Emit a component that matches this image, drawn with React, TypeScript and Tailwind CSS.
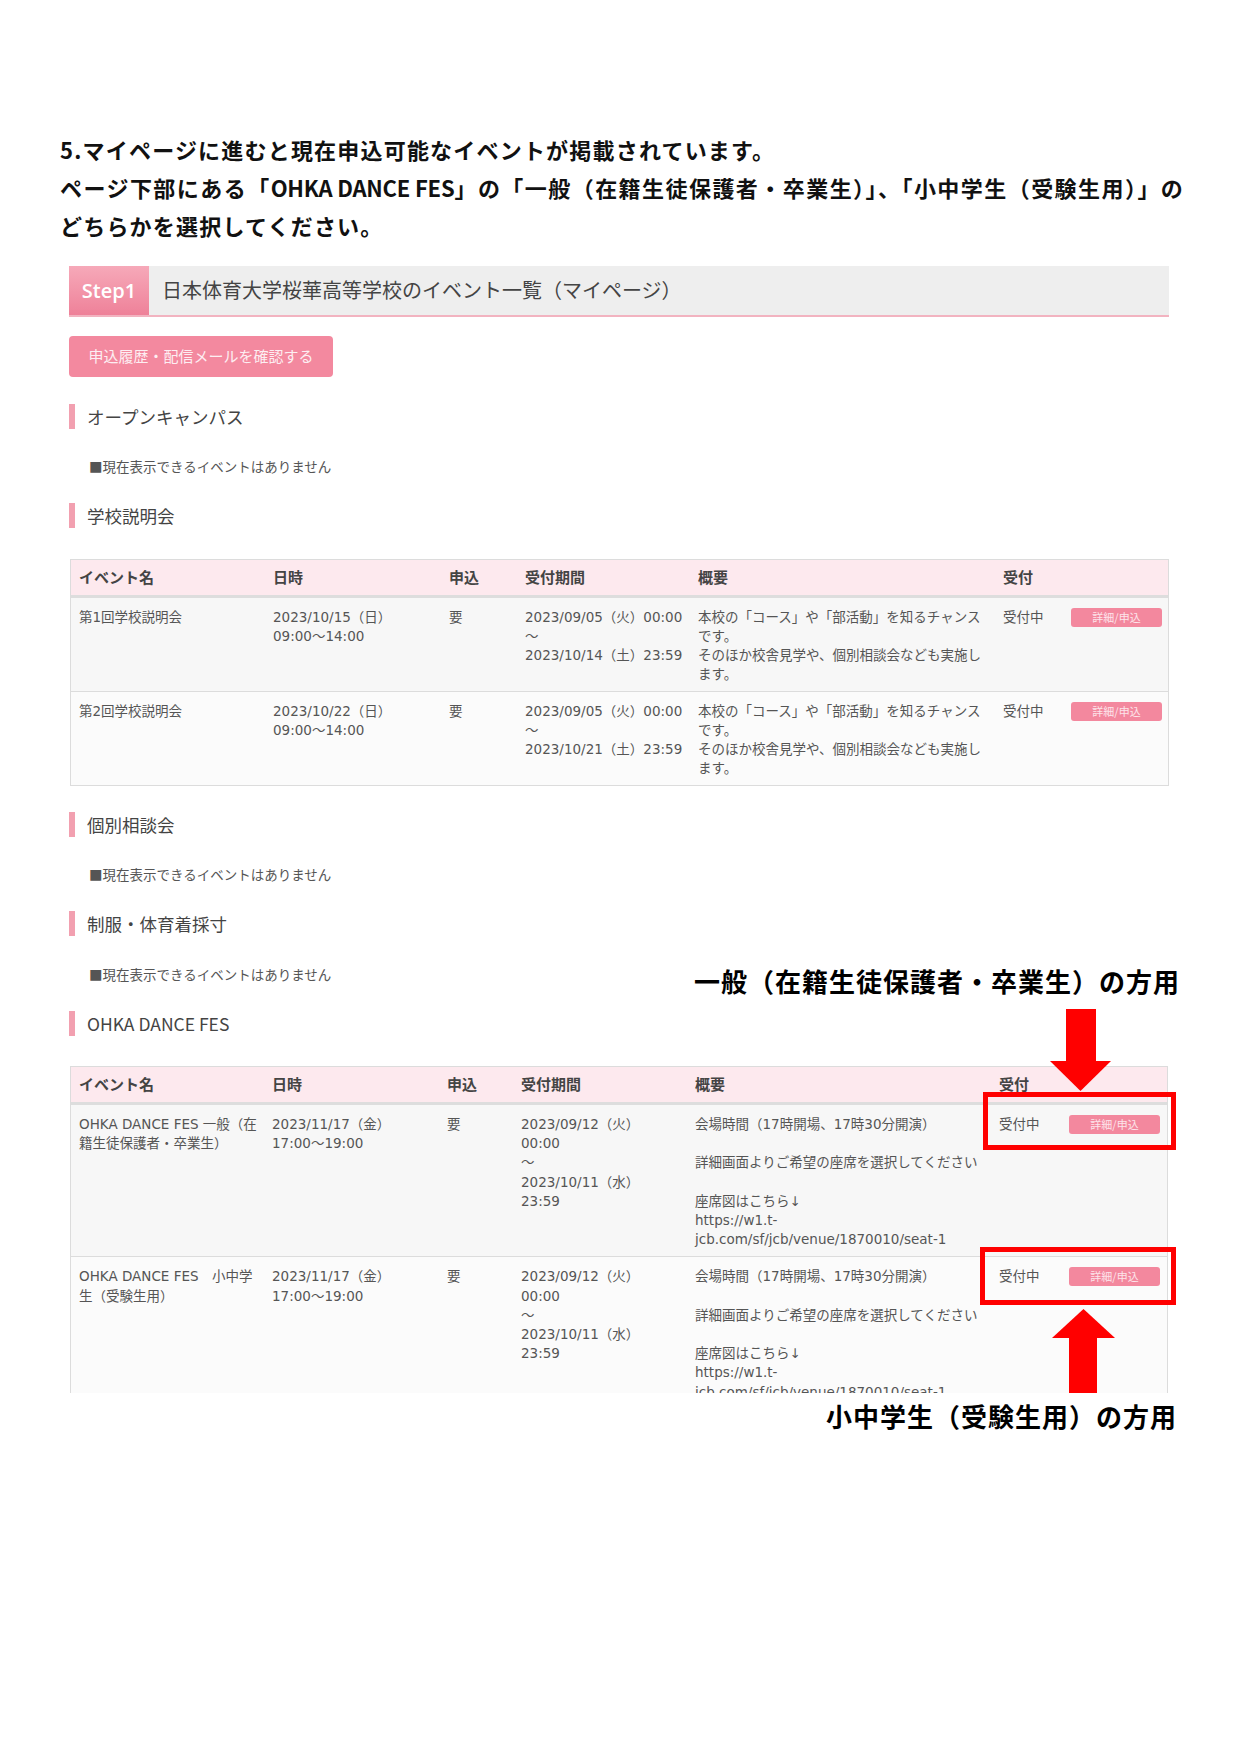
import React from "react";

const JP = { fontFamily: '"Noto Sans CJK JP", "Noto Sans", sans-serif' };
const TBL = { fontFamily: '"DejaVu Sans", "Noto Sans CJK JP", sans-serif' };

function Heading({ children }: { children: React.ReactNode }) {
  return (
    <div className="flex items-center h-[25px]">
      <div className="w-[6px] h-[25px] bg-[#f2a0b0]" />
      <div className="ml-[12px] text-[17.5px] leading-[25px] text-[#444]">{children}</div>
    </div>
  );
}

function Empty() {
  return (
    <div className="pl-[20px] text-[13.5px] leading-[20px] text-[#555]">■現在表示できるイベントはありません</div>
  );
}

function Btn() {
  return (
    <div className="w-[91px] h-[19px] rounded-[3px] bg-[#f3889e] text-[11px] leading-[19px] text-center text-[#fde4ea]" style={JP}>
      詳細/申込
    </div>
  );
}

type Row = { name: string[]; date: string[]; req: string; period: string[]; summary: string[]; status: string };

function Table({ cols, rows, lh, clipH }: { cols: string; rows: Row[]; lh: string; clipH?: string }) {
  const cell = "px-2 pt-[10px] pb-[7px]";
  return (
    <div className={clipH ? `${clipH} overflow-hidden` : ""}>
      <div className="border border-[#dcdcdc] border-b-0">
        <div className={`grid ${cols} bg-[#fde9ee] h-[38px] items-center border-b-[3px] border-[#dddddd] font-bold text-[15px] text-[#444]`}>
          <div className="px-2">イベント名</div>
          <div className="px-2">日時</div>
          <div className="px-2">申込</div>
          <div className="px-2">受付期間</div>
          <div className="px-2">概要</div>
          <div className="px-2">受付</div>
          <div className="px-2" />
        </div>
        {rows.map((r, i) => (
          <div
            key={i}
            style={TBL}
            className={`grid ${cols} ${lh} text-[13.5px] text-[#555] border-b border-[#dcdcdc] ${i % 2 === 0 ? "bg-[#f7f7f7]" : "bg-[#fbfbfb]"}`}
          >
            <div className={`${cell} whitespace-nowrap`}>
              {r.name.map((l, j) => (<div key={j}>{l}</div>))}
            </div>
            <div className={`${cell} whitespace-nowrap`}>
              {r.date.map((l, j) => (<div key={j}>{l}</div>))}
            </div>
            <div className={cell}>{r.req}</div>
            <div className={`${cell} whitespace-nowrap`}>
              {r.period.map((l, j) => (<div key={j}>{l}</div>))}
            </div>
            <div className={`${cell} whitespace-nowrap`}>
              {r.summary.map((l, j) => (<div key={j}>{l === "" ? "\u00a0" : l}</div>))}
            </div>
            <div className={cell}>{r.status}</div>
            <div className="pl-2 pt-[10px] pb-[7px]">
              <Btn />
            </div>
          </div>
        ))}
      </div>
    </div>
  );
}

const rows1: Row[] = [
  {
    name: ["第1回学校説明会"],
    date: ["2023/10/15（日）", "09:00～14:00"],
    req: "要",
    period: ["2023/09/05（火）00:00", "～", "2023/10/14（土）23:59"],
    summary: ["本校の「コース」や「部活動」を知るチャンス", "です。", "そのほか校舎見学や、個別相談会なども実施し", "ます。"],
    status: "受付中",
  },
  {
    name: ["第2回学校説明会"],
    date: ["2023/10/22（日）", "09:00～14:00"],
    req: "要",
    period: ["2023/09/05（火）00:00", "～", "2023/10/21（土）23:59"],
    summary: ["本校の「コース」や「部活動」を知るチャンス", "です。", "そのほか校舎見学や、個別相談会なども実施し", "ます。"],
    status: "受付中",
  },
];

const summary2 = [
  "会場時間（17時開場、17時30分開演）",
  "",
  "詳細画面よりご希望の座席を選択してください",
  "",
  "座席図はこちら↓",
  "https://w1.t-",
  "jcb.com/sf/jcb/venue/1870010/seat-1",
];

const rows2: Row[] = [
  {
    name: ["OHKA DANCE FES 一般（在", "籍生徒保護者・卒業生）"],
    date: ["2023/11/17（金）", "17:00～19:00"],
    req: "要",
    period: ["2023/09/12（火）", "00:00", "～", "2023/10/11（水）", "23:59"],
    summary: summary2,
    status: "受付中",
  },
  {
    name: ["OHKA DANCE FES　小中学", "生（受験生用）"],
    date: ["2023/11/17（金）", "17:00～19:00"],
    req: "要",
    period: ["2023/09/12（火）", "00:00", "～", "2023/10/11（水）", "23:59"],
    summary: summary2,
    status: "受付中",
  },
];

export default function App() {
  return (
    <div className="relative w-[1240px] h-[1755px] bg-white overflow-hidden" style={JP}>
      {/* Instructions */}
      <div className="pt-[130px] pl-[60px] font-bold text-[22px] leading-[38px] tracking-[1.2px] text-[#111] whitespace-nowrap">
        <div>5.マイページに進むと現在申込可能なイベントが掲載されています。</div>
        <div className="tracking-[1.45px]">
          ページ下部にある「<span className="tracking-[-0.2px]">OHKA DANCE FES</span>」の「一般（在籍生徒保護者・卒業生）」、「小中学生（受験生用）」の
        </div>
        <div>どちらかを選択してください。</div>
      </div>

      {/* Screenshot */}
      <div className="ml-[69px] w-[1100px] mt-[22px]">
        <div className="flex h-[51px] bg-[#eeeeee] border-b-2 border-[#f2b3c0]">
          <div className="w-[80px] h-full bg-gradient-to-b from-[#f6a9b9] to-[#ee8199] text-white text-[20px] font-semibold flex items-center justify-center" style={{ fontFamily: '"Open Sans", "Noto Sans", sans-serif' }}>
            Step1
          </div>
          <div className="ml-[13px] flex items-center text-[20px] text-[#444] pb-[2px]">日本体育大学桜華高等学校のイベント一覧（マイページ）</div>
        </div>

        <div className="mt-[19px] w-[264px] h-[41px] rounded-[4px] bg-[#f3899f] flex items-center justify-center text-[15px] text-[#fdeef2]">
          申込履歴・配信メールを確認する
        </div>

        <div className="mt-[27px]"><Heading>オープンキャンパス</Heading></div>
        <div className="mt-[27px]"><Empty /></div>
        <div className="mt-[27px]"><Heading>学校説明会</Heading></div>
        <div className="mt-[31px] pl-[1px]">
          <Table cols="grid-cols-[194px_176px_76px_173px_305px_68px_106px]" rows={rows1} lh="leading-[19px]" />
        </div>
        <div className="mt-[26px]"><Heading>個別相談会</Heading></div>
        <div className="mt-[27px]"><Empty /></div>
        <div className="mt-[27px]"><Heading>制服・体育着採寸</Heading></div>
        <div className="mt-[28px]"><Empty /></div>
        <div className="mt-[27px]"><Heading>OHKA DANCE FES</Heading></div>
        <div className="mt-[30px] pl-[1px] w-[1099px]">
          <Table cols="grid-cols-[193px_175px_74px_174px_304px_70px_106px]" rows={rows2} lh="leading-[19.2px]" clipH="h-[327px]" />
        </div>
      </div>

      {/* Annotations */}
      <div className="absolute left-[694px] top-[964px] font-bold text-[26px] leading-[34px] tracking-[1px] text-black whitespace-nowrap">
        一般（在籍生徒保護者・卒業生）の方用
      </div>
      <svg className="absolute left-[1050px] top-[1009px]" width="61" height="82" viewBox="0 0 61 82">
        <rect x="16" y="0" width="30" height="53" fill="#ff0000" />
        <polygon points="0,52 61,52 30.5,82" fill="#ff0000" />
      </svg>
      <div className="absolute left-[983px] top-[1092px] w-[193px] h-[58px] border-[5px] border-[#ff0000]" />

      <div className="absolute left-[980px] top-[1247px] w-[196px] h-[58px] border-[5px] border-[#ff0000]" />
      <svg className="absolute left-[1052px] top-[1309px]" width="63" height="84" viewBox="0 0 63 84">
        <polygon points="31.5,0 0,29 63,29" fill="#ff0000" />
        <rect x="17" y="28" width="28" height="56" fill="#ff0000" />
      </svg>
      <div className="absolute left-[826px] top-[1399px] font-bold text-[26px] leading-[34px] tracking-[1px] text-black whitespace-nowrap">
        小中学生（受験生用）の方用
      </div>
    </div>
  );
}
